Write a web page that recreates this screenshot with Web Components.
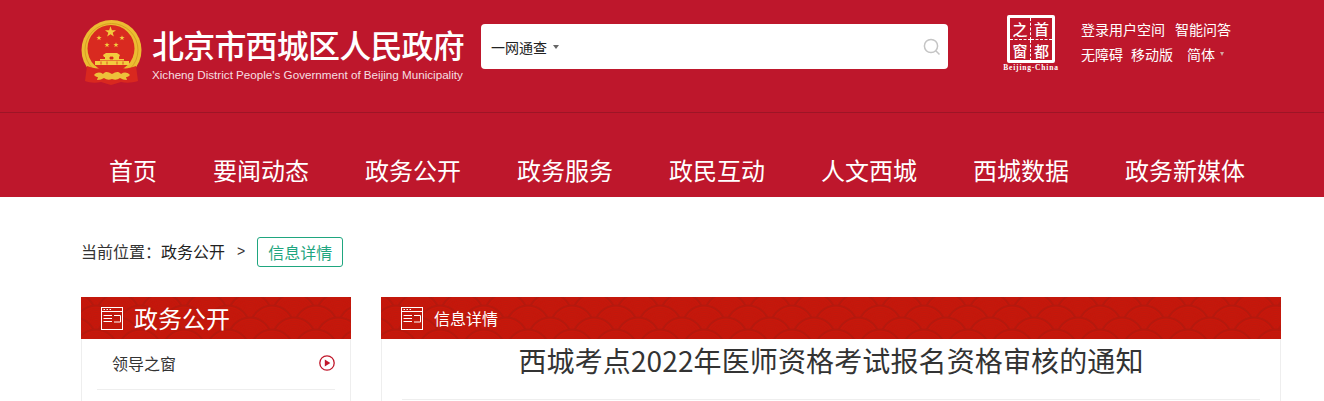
<!DOCTYPE html>
<html lang="zh"><head><meta charset="utf-8">
<style>
html,body{margin:0;padding:0;background:#fff;height:401px;overflow:hidden}
body{font-family:"Noto Sans CJK SC","Liberation Sans",sans-serif;color:#333}
</style></head><body>
<site-header></site-header>
<bread-crumb></bread-crumb>
<div id="cols" style="display:flex;gap:30px;padding:0 43px 0 81px">
<side-panel title-text="政务公开"><side-item>领导之窗</side-item></side-panel>
<main-panel title-text="信息详情" heading="西城考点2022年医师资格考试报名资格审核的通知"></main-panel>
</div>
<script>
const iconWin=`<svg width="22" height="23" viewBox="0 0 22 23" fill="none" stroke="#fff" stroke-width="1"><rect x=".5" y=".5" width="21" height="22"/><path d="M.5 4.500H21.500"/><path d="M2.500 2.500h1.500M5.500 2.500h1.500M8.500 2.500h1.500"/><path d="M2.500 8.500h8.500M2.500 11.500h8.500M2.500 14.500h8.500M13 8.500h6.500v6.500H13"/></svg>`;
function waves(id,w){
 let sym=`<circle r="22.500" fill="#b5190e"/><circle r="20.500" fill="#c8170b"/>`;
 for(let k=19;k>0;k-=2){sym+=`<circle r="${k}" fill="#c01a0e"/><circle r="${k-1}" fill="#c8170b"/>`;}
 let c='',row=0;
 for(let t=-28;t<=32;t+=12,row++){
  const ph=(row%2===1)?15:37;
  for(let x=ph-44;x<=w+44;x+=44){c+=`<use href="#${id}" x="${x}" y="${t+22}"/>`;}
 }
 return `<svg class="wv" width="${w}" height="42" viewBox="0 0 ${w} 42" aria-hidden="true"><defs><g id="${id}">${sym}</g></defs>${c}</svg>`;
}
function def(n,html){
 customElements.define(n,class extends HTMLElement{
  constructor(){super();this.attachShadow({mode:'open'}).innerHTML=typeof html==='function'?html(this):html;}
 });
}
def('nat-emblem',`<style>:host{display:block;width:62px;height:66px;flex:none}</style>
<svg width="62" height="66" viewBox="0 0 62 66">
<defs><polygon id="s" points="0,-5 1.200,-1.600 4.800,-1.500 1.900,.6 2.900,4 0,2 -2.900,4 -1.900,.6 -4.800,-1.500 -1.200,-1.600"/></defs>
<circle cx="30.500" cy="30" r="30" fill="#ecbc32"/>
<circle cx="30.500" cy="30" r="26.500" fill="none" stroke="#d79f22" stroke-width="1"/>
<circle cx="30" cy="28.500" r="23.500" fill="#d92a20"/>
<g fill="#f3cb3e"><use href="#s" transform="translate(29.500 12) scale(1.150)"/><use href="#s" transform="translate(18 18) scale(.55)"/><use href="#s" transform="translate(41 18) scale(.55)"/><use href="#s" transform="translate(26 25) scale(.55)"/><use href="#s" transform="translate(35 25) scale(.55)"/>
<path d="M22 35l3-2h11l3 2-1 2H23zM24 37h14v2H24zM19 39h24v1.500H19zM14 41h34v4H14z"/></g>
<path d="M29 37h3v2h-3zM20 41.500v3M26 41.500v3M36 41.500v3M42 41.500v3" fill="#d92a20" stroke="#d92a20" stroke-width=".8"/>
<path d="M6 46c6 2 10 3 14 2l10 3 11-3c4 1 8 0 14-2l2 15c-6 2-12 2-17 1l-10 3-10-3c-5 1-11 1-16-1z" fill="#d9281f"/>
<path d="M13 55c3-3 6-3 9-1 3-3 5-2 9 0 4-2 6-3 9 0 3-2 6-2 9 1-2 2-3 2-4 2l1 3c-3 0-5-1-7-2-3 2-5 2-8 1-3 1-5 1-8-1-2 1-4 2-7 2l1-3c-1 0-2 0-4-2z" fill="#edc03a"/>
</svg>`);
def('site-logo',`<style>:host{display:flex;gap:9px;flex:none;align-items:flex-start;padding-top:20px;color:#fff}
.t{display:flex;flex-direction:column;width:314px}
.zh{font-size:32px;line-height:40px;letter-spacing:-.8px;font-weight:500;margin-top:4px;white-space:nowrap}
.en{font:11.650px/14px "Liberation Sans",sans-serif;white-space:nowrap;margin-top:4px;color:#f6dfe2}</style>
<nat-emblem></nat-emblem><div class="t"><div class="zh">北京市西城区人民政府</div><div class="en">Xicheng District People's Government of Beijing Municipality</div></div>`);
def('search-box',`<style>:host{display:flex;align-items:center;width:467px;height:45px;box-sizing:border-box;background:#fff;border-radius:4px;padding:0 7px 0 10px;color:#222;font-size:14px;flex:none}
.c{margin-left:6px;width:0;height:0;border:3px solid transparent;border-top:4px solid #666;border-bottom:0}
svg{margin-left:auto}</style>
<span>一网通查</span><span class="c"></span>
<svg width="18" height="18" viewBox="0 0 18 18" fill="none" stroke="#c4c4c4" stroke-width="1.500"><circle cx="8" cy="8" r="6.600"/><path d="M12.800 12.800L16.500 16.500"/></svg>`);
def('capital-logo',`<style>:host{display:flex;flex-direction:column;align-items:center;width:60px;flex:none;color:#fff}
.b{width:48px;height:48px;box-sizing:border-box;border:3px solid #fff;border-radius:2px;display:grid;grid-template:1fr 1fr/1fr 1fr;font:500 15px/21px "Noto Sans CJK SC",sans-serif}
.b span{display:flex;align-items:center;justify-content:center}
.b span:nth-child(1){border-right:1px dashed #fff;border-bottom:1px dashed #fff}.b span:nth-child(2){border-bottom:1px dashed #fff}.b span:nth-child(3){border-right:1px dashed #fff}
.e{font:700 7.500px/8px "Liberation Serif",serif;letter-spacing:.8px;margin-top:1px;white-space:nowrap}</style>
<div class="b"><span>之</span><span>首</span><span>窗</span><span>都</span></div><div class="e">Beijing-China</div>`);
def('top-links',`<style>:host{display:flex;flex-direction:column;gap:5px;font-size:14px;line-height:20px;color:#fff;width:190px;flex:none}
.r{display:flex;white-space:nowrap}.c{width:0;height:0;border:2.500px solid transparent;border-top:4px solid #d3a7a0;border-bottom:0;align-self:center;margin-left:5px}</style>
<div class="r"><span>登录用户空间</span><span style="margin-left:10px">智能问答</span></div>
<div class="r"><span>无障碍</span><span style="margin-left:8px">移动版</span><span style="margin-left:14px">简体</span><span class="c"></span></div>`);
def('main-nav',`<style>:host{display:flex;gap:56px;padding:40px 0 0 109px;height:84px;align-items:flex-start;box-sizing:border-box;font-size:24px;line-height:34px;color:#fff}span{white-space:nowrap}</style>
<span>首页</span><span>要闻动态</span><span>政务公开</span><span>政务服务</span><span>政民互动</span><span>人文西城</span><span>西城数据</span><span>政务新媒体</span>`);
def('site-header',`<style>:host{display:block;height:197px;background:#be172c}
.top{display:flex;height:113px;box-sizing:border-box;border-bottom:1px solid #9d1526;padding-left:81px}
search-box{margin:24px 0 0 0}capital-logo{margin:15px 0 0 53px}top-links{margin:19px 0 0 20px}
site-logo{margin-right:15px}</style>
<div class="top"><site-logo></site-logo><search-box></search-box><capital-logo></capital-logo><top-links></top-links></div>
<main-nav></main-nav>`);
def('bread-crumb',`<style>:host{display:flex;align-items:center;height:30px;margin:40px 0 30px;padding-left:81px;font-size:16px;color:#333}
span:not(.t){padding-bottom:2px}
.b{color:#222}.g{margin:0 12px;font:14px "Liberation Sans",sans-serif}
.t{box-sizing:border-box;height:30px;width:86px;border:1px solid #1fa67f;border-radius:3px;color:#1fa67f;display:flex;align-items:center;justify-content:center}</style>
<span>当前位置：</span><span class="b">政务公开</span><span class="g">&gt;</span><span class="t">信息详情</span>`);
def('side-panel',h=>`<style>:host{display:block;width:270px;flex:none;height:200px;box-sizing:border-box;border:solid #eeeeee;border-width:0 1px}
.h{position:relative;height:42px;margin:0 -1px;background:#c8170b;overflow:hidden;color:#fff;font-size:24px;line-height:42px}
.wv{position:absolute;left:0;top:0}.c{position:relative;display:flex;align-items:center;gap:11px;padding-left:20px;height:42px}svg:not(.wv){flex:none}
</style><div class="h">${waves('p1',270)}<div class="c">${iconWin}<span>${h.getAttribute('title-text')||'政务公开'}</span></div></div><slot></slot>`);
def('side-item',`<style>:host{display:flex;align-items:center;justify-content:space-between;height:51px;box-sizing:border-box;margin:0 15px;padding:0 0 2px 15px;border-bottom:1px solid #eee;font-size:16px;color:#333}</style>
<span><slot></slot></span><svg width="16" height="16" viewBox="0 0 16 16"><circle cx="8" cy="8" r="7.200" fill="none" stroke="#c0172a" stroke-width="1.300"/><path d="M5.800 4.600L11.300 8l-5.500 3.400z" fill="#c0172a"/></svg>`);
def('main-panel',h=>`<style>:host{display:block;width:900px;flex:none;height:200px;box-sizing:border-box;border:solid #eeeeee;border-width:0 1px}
.h{position:relative;height:42px;margin:0 -1px;background:#c8170b;overflow:hidden;color:#fff;font-size:16px;line-height:42px}
.wv{position:absolute;left:0;top:0}.c{position:relative;display:flex;align-items:center;gap:11px;padding-left:20px;height:42px}
.m{margin:0 20px;border-bottom:1px solid #eee;height:61px;box-sizing:border-box}
h1{margin:0;font-weight:400;font-size:28px;line-height:42px;letter-spacing:.12px;text-align:center;color:#333;white-space:nowrap}
</style><div class="h">${waves('p2',900)}<div class="c">${iconWin}<span>${h.getAttribute('title-text')||'信息详情'}</span></div></div>
<div class="m"><h1>${h.getAttribute('heading')||'西城考点2022年医师资格考试报名资格审核的通知'}</h1></div>`);
</script>
</body></html>
